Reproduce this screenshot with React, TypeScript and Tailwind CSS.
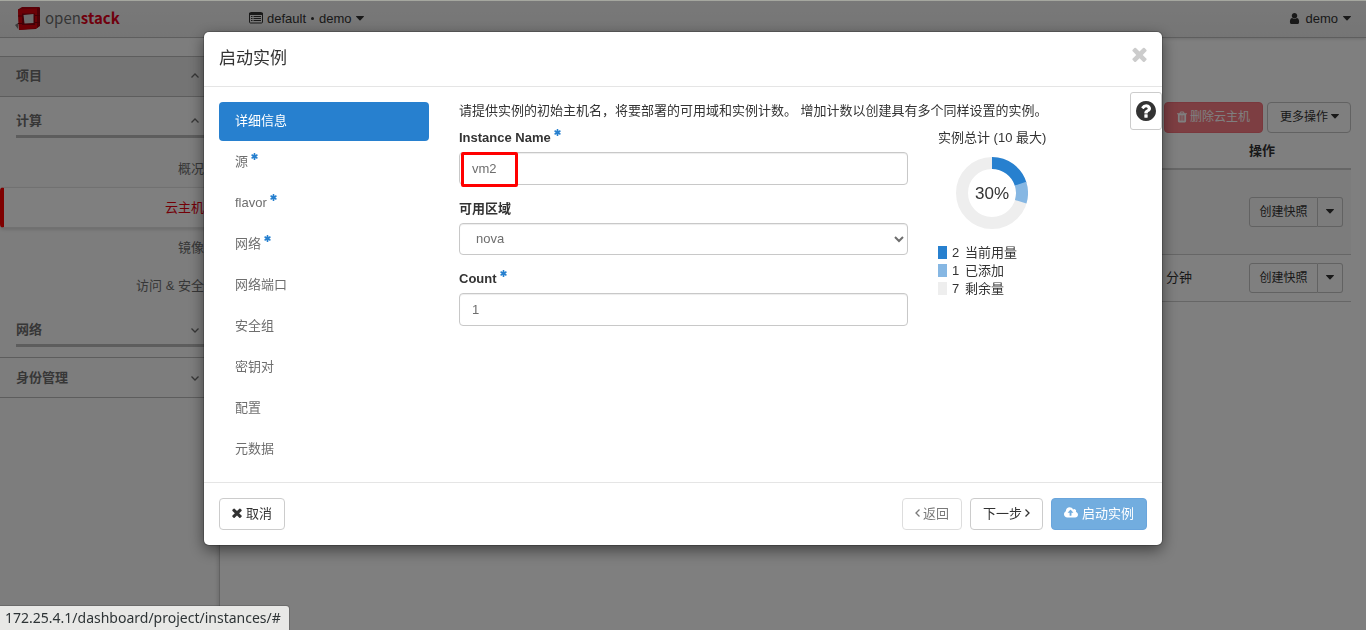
import React from "react";

const paths = {
  times:
    "M1490 1322q0 40-28 68l-136 136q-28 28-68 28t-68-28l-294-294-294 294q-28 28-68 28t-68-28l-136-136q-28-28-28-68t28-68l294-294-294-294q-28-28-28-68t28-68l136-136q28-28 68-28t68 28l294 294 294-294q28-28 68-28t68 28l136 136q28 28 28 68t-28 68l-294 294 294 294q28 28 28 68z",
  question:
    "M1024 1376v-192q0-14-9-23t-23-9h-192q-14 0-23 9t-9 23v192q0 14 9 23t23 9h192q14 0 23-9t9-23zm256-672q0-88-55.5-163t-138.5-116-170-41q-243 0-371 213-15 24 8 42l132 100q7 6 19 6 16 0 25-12 53-68 86-92 34-24 86-24 48 0 85.5 26t37.5 59q0 38-20 61t-68 45q-63 28-115.5 86.5t-52.5 125.5v36q0 14 9 23t23 9h192q14 0 23-9t9-23q0-19 21.5-49.5t54.5-49.5q32-18 49-28.5t46-35 44.5-48 28-60.5 12.5-81zm384 192q0 209-103 385.5t-279.5 279.5-385.5 103-385.5-103-279.5-279.5-103-385.5 103-385.5 279.5-279.5 385.5-103 385.5 103 279.5 279.5 103 385.5z",
  cloud:
    "M1216 864q0-14-9-23l-352-352q-9-9-23-9t-23 9l-351 351q-10 12-10 24 0 14 9 23t23 9h224v352q0 13 9.5 22.5t22.5 9.5h192q13 0 22.5-9.5t9.5-22.5v-352h224q13 0 22.5-9.5t9.5-22.5zm640 288q0 159-112.5 271.5t-271.5 112.5h-1088q-185 0-316.5-131.5t-131.5-316.5q0-130 70-240t188-165q-2-30-2-43 0-212 150-362t362-150q156 0 285.5 87t188.5 231q71-62 166-62 106 0 181 75t75 181q0 76-41 138 130 31 213.5 135.5t83.5 238.5z",
  trash:
    "M704 1376v-704q0-14-9-23t-23-9h-64q-14 0-23 9t-9 23v704q0 14 9 23t23 9h64q14 0 23-9t9-23zm256 0v-704q0-14-9-23t-23-9h-64q-14 0-23 9t-9 23v704q0 14 9 23t23 9h64q14 0 23-9t9-23zm256 0v-704q0-14-9-23t-23-9h-64q-14 0-23 9t-9 23v704q0 14 9 23t23 9h64q14 0 23-9t9-23zm-544-992h448l-48-117q-7-9-17-11h-317q-10 2-17 11zm928 32v64q0 14-9 23t-23 9h-96v948q0 83-47 143.5t-113 60.5h-832q-66 0-113-58.5t-47-141.5v-952h-96q-14 0-23-9t-9-23v-64q0-14 9-23t23-9h309l70-167q15-37 54-63t79-26h320q40 0 79 26t54 63l70 167h309q14 0 23 9t9 23z",
  user:
    "M1536 1399q0 109-62.5 187t-150.5 78h-854q-88 0-150.5-78t-62.5-187q0-85 8.5-160.5t31.5-152 58.5-131 94-89 134.5-34.5q131 128 313 128t313-128q76 0 134.5 34.5t94 89 58.5 131 31.5 152 8.5 160.5zm-256-887q0 159-112.5 271.5t-271.5 112.5-271.5-112.5-112.5-271.5 112.5-271.5 271.5-112.5 271.5 112.5 112.5 271.5z",
  asterisk:
    "M1546 1050q46 26 59.5 77.5t-12.5 97.5l-64 110q-26 46-77.5 59.5t-97.5-12.5l-266-153v307q0 52-38 90t-90 38h-128q-52 0-90-38t-38-90v-307l-266 153q-46 26-97.5 12.5t-77.5-59.5l-64-110q-26-46-12.5-97.5t59.5-77.5l266-154-266-154q-46-26-59.5-77.5t12.5-97.5l64-110q26-46 77.5-59.5t97.5 12.5l266 153v-307q0-52 38-90t90-38h128q52 0 90 38t38 90v307l266-153q46-26 97.5-12.5t77.5 59.5l64 110q26 46 12.5 97.5t-59.5 77.5l-266 154z",
};

function Icon({ name, className, box = "0 0 1792 1792" }: { name: keyof typeof paths; className: string; box?: string }) {
  return (
    <svg viewBox={box} className={`shrink-0 ${className}`} fill="currentColor" aria-hidden="true">
      <path d={paths[name]} />
    </svg>
  );
}

function Caret() {
  return (
    <svg viewBox="0 0 8 5" className="h-[5px] w-2 shrink-0" fill="currentColor" aria-hidden="true">
      <path d="M0.5 0h7q.8 .1 .3 .8L4.5 4.3q-.5 .4-1 0L.2 .8Q-.3 .1 .5 0z" />
    </svg>
  );
}

function Angle({ dir, className = "" }: { dir: "up" | "down" | "left" | "right"; className?: string }) {
  const d = {
    up: "M1.5 6.5 5 3l3.5 3.5",
    down: "M1.5 3.5 5 7l3.500-3.500",
    left: "M6.5 1.5 3 5l3.5 3.5",
    right: "M3.5 1.5 7 5 3.5 8.5",
  }[dir];
  return (
    <svg viewBox="0 0 10 10" className={`size-2.5 shrink-0 ${className}`} fill="none" stroke="currentColor" strokeWidth="1.3" aria-hidden="true">
      <path d={d} />
    </svg>
  );
}

function Required() {
  return <Icon name="asterisk" className="ml-[3px] inline-block size-[7px] -translate-y-1.5 text-[#2780cf]" box="180 120 1432 1552" />;
}

function Logo() {
  return (
    <a href="#" className="flex items-center gap-1" aria-label="openstack">
      <svg viewBox="0 0 26 25" className="h-[25px] w-[26px]" aria-hidden="true">
        <path d="M0 19 3 17v6z" fill="#777" />
        <path d="M3 3.500 7 1l17.500 0L25 2v17.500L21 23 4 24z" fill="#b00010" />
        <path d="M3 3.500 22 2.500V22L4 24z" fill="#d8000a" />
        <path d="M22 2.500 25 2v18l-3 2z" fill="#96000c" />
        <path d="M3 10h5M18 9.500h7M3 17.500h5M18 16.500h7" stroke="#800008" strokeWidth="1" />
        <path d="M7 7.500h13v11.500H7z" fill="#8a000c" />
        <path d="M8.500 9 18.500 8v9l-9 .5z" fill="#d8d8d8" />
      </svg>
      <span className="font-['Noto_Sans_CJK_SC',sans-serif] text-[15px] leading-6 text-[#6b6b6b]">
        open<span className="font-bold text-[#e0001a]">stack</span>
      </span>
    </a>
  );
}

function Header() {
  return (
    <header className="flex h-[37px] items-center justify-between border-b border-[#bdbdbd] bg-linear-to-b from-[#f2f2f2] to-[#ebebeb] px-[15px] pb-0.5 shadow-[0_1px_3px_rgba(0,0,0,0.15)]">
      <div className="flex items-center">
        <div className="w-[234px]">
          <Logo />
        </div>
        <button className="flex items-center gap-1">
          <svg viewBox="0 0 14 12" className="h-3 w-3.5" aria-hidden="true">
            <rect x=".5" y=".5" width="13" height="10.500" rx="1" fill="none" stroke="currentColor" />
            <path d="M2 4.500h1.500M4.500 4.500H12M2 6.500h1.500M4.500 6.500H12M2 8.500h1.500M4.500 8.500H12" stroke="currentColor" />
            <path d="M0 1h14v2H0z" fill="currentColor" />
          </svg>
          <span>default</span>
          <span className="mx-px size-[3px] rounded-full bg-[#333]" />
          <span>demo</span>
          <Caret />
        </button>
      </div>
      <button className="flex items-center gap-[5px]">
        <Icon name="user" className="h-[11px] w-[11px]" box="256 128 1280 1536" />
        <span>demo</span>
        <Caret />
      </button>
    </header>
  );
}

const computeItems = ["概况", "云主机", "镜像", "访问 & 安全"];

function Sidebar() {
  return (
    <nav className="w-[220px] shrink-0 border-r border-[#c4c4c4] bg-[#fafafa] pt-[18px] text-[#6e6e6e] shadow-[inset_-4px_0_4px_-3px_rgba(0,0,0,0.15)]">
      <button className="flex h-[41px] w-full items-center justify-between border-y border-[#bbb] bg-[#e9e9e9] pr-[19px] pb-0.5 pl-4 font-bold">
        项目 <Angle dir="up" />
      </button>
      <div className="pl-4">
        <button className="flex h-[41px] w-full items-end justify-between border-b-[3px] border-[#bbb] pr-[19px] pb-[5px] font-bold">
          计算 <Angle dir="up" className="mb-1" />
        </button>
      </div>
      <ul className="pt-[11px] pb-1.5">
        {computeItems.map((item) => (
          <li key={item}>
            <a
              href="#"
              className={
                item === "云主机"
                  ? "flex h-[41px] items-center justify-end rounded-l-sm border-y border-l-4 border-y-[#e2e2e2] border-l-[#f00] bg-white pr-[15px] text-[#e8000f] shadow-[0_2px_3px_rgba(0,0,0,0.12)]"
                  : "flex h-[38px] items-center justify-end pr-[15px]"
              }
            >
              {item}
            </a>
          </li>
        ))}
      </ul>
      <div className="pb-2.5 pl-4">
        <button className="flex h-[37px] w-full items-end justify-between border-b-[3px] border-[#bbb] pr-[19px] pb-[5px] font-bold">
          网络 <Angle dir="down" className="mb-1" />
        </button>
      </div>
      <button className="flex h-[41px] w-full items-center justify-between border-y border-[#bbb] pr-[19px] pl-4 font-bold">
        身份管理 <Angle dir="down" />
      </button>
    </nav>
  );
}

function SnapshotActions() {
  return (
    <div className="flex h-[30px] text-xs">
      <button className="flex-1 rounded-l-[3px] border border-[#c4c4c4]">创建快照</button>
      <button className="flex w-[25px] items-center justify-center rounded-r-[3px] border border-l-0 border-[#c4c4c4]" aria-label="更多操作">
        <Caret />
      </button>
    </div>
  );
}

function Instances() {
  return (
    <main className="min-w-0 flex-1 px-[15px] pt-16">
      <div className="flex justify-end gap-1 text-xs">
        <button className="flex h-[31px] items-center gap-[3px] rounded-[4px] border border-[#f5707a] bg-[#fb7c85] px-3 pb-0.5 text-white">
          <Icon name="trash" className="h-3 w-[10px]" box="192 128 1408 1536" />
          删除云主机
        </button>
        <button className="flex h-[31px] items-center gap-[3px] rounded-[4px] border border-[#c4c4c4] pr-[11px] pb-0.5 pl-3">
          更多操作 <Caret />
        </button>
      </div>
      <table className="w-full table-fixed border-collapse text-left">
        <colgroup>
          <col />
          <col className="w-[83px]" />
          <col className="w-[110px]" />
        </colgroup>
        <thead>
          <tr className="h-9 border-b-2 border-[#ccc]">
            <th />
            <th />
            <th className="px-2">操作</th>
          </tr>
        </thead>
        <tbody>
          <tr className="h-[85px] border-b border-[#ccc] bg-[#f9f9f9]">
            <td />
            <td />
            <td className="px-2">
              <SnapshotActions />
            </td>
          </tr>
          <tr className="h-[47px] border-b border-[#ccc]">
            <td />
            <td className="px-2">分钟</td>
            <td className="px-2">
              <SnapshotActions />
            </td>
          </tr>
        </tbody>
      </table>
    </main>
  );
}

const steps = [
  { label: "详细信息", active: true },
  { label: "源", required: true },
  { label: "flavor", required: true },
  { label: "网络", required: true },
  { label: "网络端口" },
  { label: "安全组" },
  { label: "密钥对" },
  { label: "配置" },
  { label: "元数据" },
];

const legend = [
  { color: "bg-[#2780cf]", count: 2, label: "当前用量" },
  { color: "bg-[#86b7e3]", count: 1, label: "已添加" },
  { color: "bg-[#eee]", count: 7, label: "剩余量" },
];

const field =
  "block w-full rounded-[4px] border border-[#c8c8c8] bg-white px-3 text-[#6e6e6e] shadow-[inset_0_1px_1px_rgba(0,0,0,0.075)]";

function QuotaChart() {
  return (
    <section className="min-w-0 flex-1 leading-[19px]">
      <h2>实例总计 (10 最大)</h2>
      <svg viewBox="0 0 72 72" className="mt-2.5 ml-[18px] size-[72px]" role="img" aria-label="30%">
        <circle cx="36" cy="36" r="30" fill="none" stroke="#eee" strokeWidth="12" />
        <path d="M36 6A30 30 0 0 1 64.700 27.200" fill="none" stroke="#2780cf" strokeWidth="12" />
        <path d="M64.500 26.700A30 30 0 0 1 64.700 44.800" fill="none" stroke="#86b7e3" strokeWidth="12" />
        <text x="36" y="42" textAnchor="middle" fontSize="17" fill="#333">
          30%
        </text>
      </svg>
      <ul className="mt-3.5">
        {legend.map((row) => (
          <li key={row.label} className="flex h-[18px] items-center">
            <span className={`mr-[5px] h-[13px] w-[9px] ${row.color}`} />
            <span className="w-[13px]">{row.count}</span>
            <span>{row.label}</span>
          </li>
        ))}
      </ul>
    </section>
  );
}

function LaunchDialog() {
  return (
    <div
      role="dialog"
      aria-labelledby="dialog-title"
      className="relative w-full max-w-[958px] rounded-[5px] bg-white shadow-[0_0_0_1px_rgba(0,0,0,0.2),0_5px_15px_rgba(0,0,0,0.5)]"
    >
      <div className="flex h-[55px] items-center justify-between border-b border-[#e5e5e5] px-[15px] pb-0.5">
        <h1 id="dialog-title" className="text-[17px]">
          启动实例
        </h1>
        <button aria-label="关闭" className="mb-2 text-[#ccc]">
          <Icon name="times" className="size-[15px]" box="302 302 1188 1252" />
        </button>
      </div>

      <button
        aria-label="帮助"
        className="absolute top-15 right-0 flex h-[38px] w-8 items-center justify-center rounded-[3px] border border-[#ccc] bg-white"
      >
        <Icon name="question" className="size-5" box="128 128 1536 1536" />
      </button>

      <div className="flex gap-[30px] px-[15px] pt-[15px] pb-[13px]">
        <ul className="flex w-[210px] shrink-0 flex-col gap-0.5">
          {steps.map((step) => (
            <li key={step.label}>
              <a
                href="#"
                className={
                  step.active
                    ? "block h-[39px] rounded-[4px] bg-[#2780cf] px-4 leading-[38px] text-white"
                    : "block h-[39px] px-4 leading-[37px] text-[#6e6e6e]"
                }
              >
                {step.label}
                {step.required && <Required />}
              </a>
            </li>
          ))}
        </ul>

        <div className="min-w-0 flex-1">
          <p className="mb-[9px] leading-[17px]">
            请提供实例的初始主机名，将要部署的可用域和实例计数。 增加计数以创建具有多个同样设置的实例。
          </p>
          <div className="flex gap-[30px]">
            <form className="w-[449px] shrink-0">
              <label htmlFor="name" className="mb-[5px] block leading-[19px] font-bold">
                Instance Name
                <Required />
              </label>
              <div className="relative mb-3.5">
                <input id="name" type="text" defaultValue="vm2" className={`h-[33px] ${field}`} />
                <span className="pointer-events-none absolute top-0 left-0.5 h-[35px] w-[57px] rounded-[2px] border-[3px] border-[#f00]" />
              </div>
              <label htmlFor="zone" className="mb-[5px] block leading-[19px] font-bold">
                可用区域
              </label>
              <select id="zone" className={`mb-3.5 h-8 pb-0.5 ${field}`}>
                <option>nova</option>
              </select>
              <label htmlFor="count" className="mb-[5px] block leading-[19px] font-bold">
                Count
                <Required />
              </label>
              <input id="count" type="number" defaultValue={1} className={`h-[33px] ${field}`} />
            </form>
            <QuotaChart />
          </div>
        </div>
      </div>

      <div className="flex items-center justify-between border-t border-[#e5e5e5] p-[15px]">
        <button className="flex h-8 items-center gap-1 rounded-[4px] border border-[#ccc] px-3 pb-0.5">
          <Icon name="times" className="size-[10px]" box="302 302 1188 1252" />
          取消
        </button>
        <div className="flex gap-2">
          <button className="flex h-8 items-center rounded-[4px] border border-[#ccc] pr-3 pb-0.5 pl-2.5 opacity-65" disabled>
            <Angle dir="left" />
            返回
          </button>
          <button className="flex h-8 items-center rounded-[4px] border border-[#ccc] pr-2.5 pb-0.5 pl-3">
            下一步
            <Angle dir="right" />
          </button>
          <button className="flex h-8 items-center gap-1 rounded-[4px] border border-[#6aa5dc] bg-[#72addf] px-3 pb-0.5 text-white" disabled>
            <Icon name="cloud" className="h-3 w-[14px]" box="-64 100 1920 1640" />
            启动实例
          </button>
        </div>
      </div>
    </div>
  );
}

export default function App() {
  return (
    <div className="flex min-h-screen flex-col border-t border-[#a9aca3] bg-white font-['Liberation_Sans','Noto_Sans_CJK_SC',sans-serif] text-[13px] leading-[19px] text-[#333]">
      <Header />
      <div className="flex flex-1">
        <Sidebar />
        <Instances />
      </div>
      <div className="fixed inset-x-0 top-px bottom-0 flex items-start justify-center bg-black/50 pt-[31px]">
        <LaunchDialog />
      </div>
      <div className="fixed bottom-0 left-0 rounded-tr-[3px] bg-[#e8e8e6] pr-2 pl-[5px] font-['Noto_Sans',sans-serif] text-[14px] leading-6 text-[#2e3436] shadow-[0_0_0_1px_rgba(0,0,0,0.15)]">
        172.25.4.1/dashboard/project/instances/#
      </div>
    </div>
  );
}
